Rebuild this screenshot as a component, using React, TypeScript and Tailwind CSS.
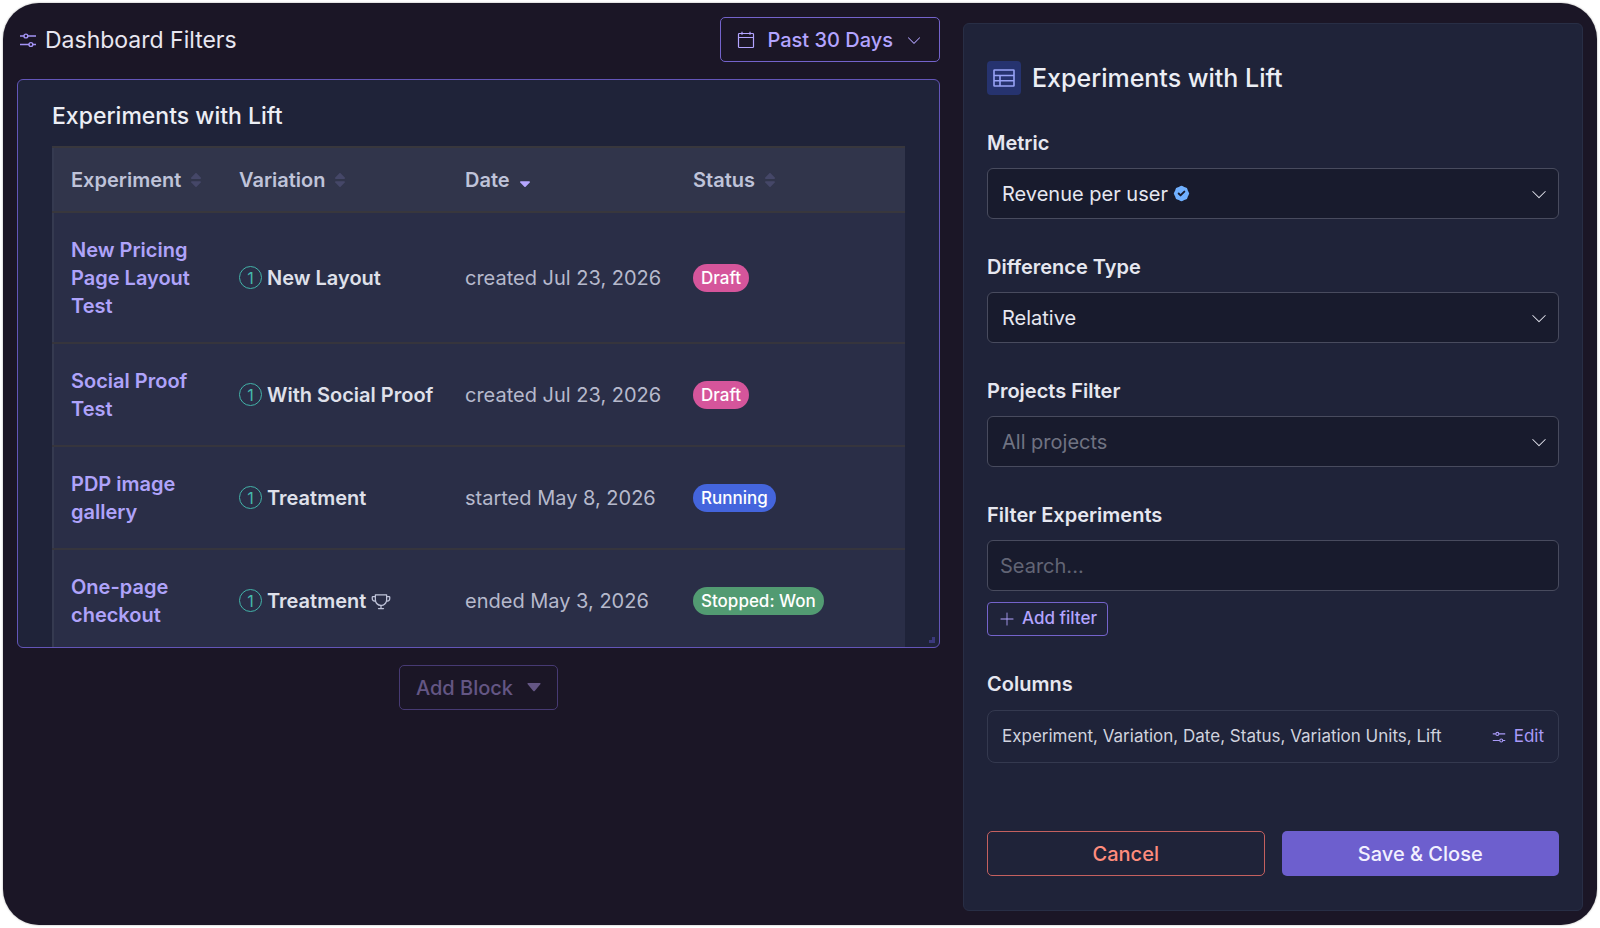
import type { ReactNode } from 'react';
import { FaSort, FaSortDown } from 'react-icons/fa';
import { HiBadgeCheck } from 'react-icons/hi';
import { PiCaretDownLight, PiPlusLight, PiTrophy } from 'react-icons/pi';

type Status = 'Draft' | 'Running' | 'Stopped: Won';

interface Experiment {
  name: string;
  variation: string;
  date: string;
  status: Status;
  won?: boolean;
}

const EXPERIMENTS: Experiment[] = [
  { name: 'New Pricing Page Layout Test', variation: 'New Layout', date: 'created Jul 23, 2026', status: 'Draft' },
  { name: 'Social Proof Test', variation: 'With Social Proof', date: 'created Jul 23, 2026', status: 'Draft' },
  { name: 'PDP image gallery', variation: 'Treatment', date: 'started May 8, 2026', status: 'Running' },
  { name: 'One-page checkout', variation: 'Treatment', date: 'ended May 3, 2026', status: 'Stopped: Won', won: true },
];

const STATUS_CLASSES: Record<Status, string> = {
  Draft: 'bg-[#d5559b]',
  Running: 'bg-[#4465dd]',
  'Stopped: Won': 'bg-[#529b72]',
};

const COLUMNS = [
  { label: 'Experiment', width: 'w-[169px]' },
  { label: 'Variation', width: 'w-[226px]' },
  { label: 'Date', width: 'w-[228px]', sorted: true },
  { label: 'Status', width: '' },
];

function SlidersIcon({ className }: { className?: string }) {
  return (
    <svg viewBox="0 0 18 18" fill="none" stroke="currentColor" strokeWidth="1.4" className={className} aria-hidden>
      <path d="M1 5h4M8.8 5H17M1 13.5h9M13.8 13.5H17" />
      <circle cx="6.9" cy="5" r="1.9" />
      <circle cx="11.9" cy="13.5" r="1.9" />
    </svg>
  );
}

function CalendarIcon({ className }: { className?: string }) {
  return (
    <svg viewBox="0 0 18 18" fill="none" stroke="currentColor" strokeWidth="1.2" className={className} aria-hidden>
      <rect x="1.5" y="2.5" width="15" height="14" rx="0.8" />
      <path d="M1.5 6.5h15M5 0.8v3M13 0.8v3" />
    </svg>
  );
}

function TableIcon() {
  return (
    <svg viewBox="0 0 22 18" fill="none" stroke="currentColor" strokeWidth="1.6" className="h-[18px] w-[22px]" aria-hidden>
      <rect x="1" y="1" width="20" height="16" rx="0.5" />
      <path d="M1 6.5h20M1 11.7h20M7 6.5V17" />
    </svg>
  );
}

function Field({ label, htmlFor, children }: { label: string; htmlFor: string; children: ReactNode }) {
  return (
    <div className="mb-[34px]">
      <label htmlFor={htmlFor} className="mb-[11px] block text-xl leading-7 font-semibold text-[#e6e7f0]">
        {label}
      </label>
      {children}
    </div>
  );
}

function SelectBox({ id, value, placeholder, verified }: { id: string; value: string; placeholder?: boolean; verified?: boolean }) {
  return (
    <div className="relative">
      <select
        id={id}
        className={`block h-[51px] w-full appearance-none rounded-md border border-[#484b5e] bg-[#181b2d] px-[14px] text-xl ${
          placeholder ? 'text-[#707382]' : 'text-[#e6e7f0]'
        }`}
      >
        <option>{value}</option>
      </select>
      {verified && (
        <span className="pointer-events-none absolute inset-y-0 left-[15px] flex items-center gap-1 text-xl">
          <span className="invisible">{value}</span>
          <HiBadgeCheck className="h-[19px] w-[19px] text-[#70b0ff]" />
        </span>
      )}
      <PiCaretDownLight className="pointer-events-none absolute top-4 right-2.5 h-5 w-5 text-[#e6e7f0]" />
    </div>
  );
}

function ExperimentsTable() {
  return (
    <table className="w-full table-fixed border-collapse border-l-2 border-[#353a50] bg-[#2a2e47] text-left text-xl leading-7">
      <thead className="border-y-2 border-[#38373d] bg-[#31354b] text-[#bfc3d9]">
        <tr>
          {COLUMNS.map(({ label, width, sorted }) => (
            <th key={label} scope="col" className={`h-[65px] pl-[17px] font-semibold ${width}`}>
              <button type="button" className="flex items-center gap-1.5">
                {label}
                {sorted ? (
                  <FaSortDown className="h-[18px] w-[18px] text-[#b5a6ff]" />
                ) : (
                  <FaSort className="h-[18px] w-[18px] text-[#454768]" />
                )}
              </button>
            </th>
          ))}
        </tr>
      </thead>
      <tbody>
        {EXPERIMENTS.map((e) => (
          <tr key={e.name} className="border-b-2 border-[#36353d]">
            <td className="pt-[23px] pr-6 pb-[22px] pl-[17px] font-semibold text-[#afa3fa]">
              <a href="#experiment">{e.name}</a>
            </td>
            <td className="pl-[17px]">
              <div className="flex items-center font-semibold text-[#dfe0ea]">
                <span className="mr-[5px] flex h-[23px] w-[23px] items-center justify-center rounded-full border border-[#43b3a9] text-base font-normal text-[#45b8ac]">
                  1
                </span>
                {e.variation}
                {e.won && <PiTrophy className="ml-[5px] h-5 w-5 text-[#bfc3d9]" />}
              </div>
            </td>
            <td className="pl-[17px] text-[#b6b9cc]">{e.date}</td>
            <td className="pl-[17px]">
              <span className={`inline-block rounded-full px-2 text-[17px] leading-7 font-medium text-white ${STATUS_CLASSES[e.status]}`}>
                {e.status}
              </span>
            </td>
          </tr>
        ))}
      </tbody>
    </table>
  );
}

function Dashboard() {
  return (
    <main className="min-w-0">
      <div className="flex items-center justify-between">
        <h1 className="flex items-center gap-2 pl-0.5 text-[23px] leading-8 text-[#e8e6f0]">
          <SlidersIcon className="h-[18px] w-[18px] text-[#a494f5]" />
          Dashboard Filters
        </h1>
        <button type="button" className="flex h-[45px] items-center rounded-[5px] border border-[#7463cb] px-4 text-xl font-medium text-[#b3a4ff]">
          <CalendarIcon className="mr-3 h-[18px] w-[18px]" />
          Past 30 Days
          <PiCaretDownLight className="ml-3 h-[18px] w-[18px]" />
        </button>
      </div>

      <section className="relative mt-[17px] h-[569px] overflow-hidden rounded-md border border-[#6355b8] bg-[#1f2339] px-[34px] pt-5">
        <h2 className="mb-[14px] text-[23px] leading-8 font-medium text-[#eceef5]">Experiments with Lift</h2>
        <ExperimentsTable />
        <span className="absolute right-1 bottom-1 h-1.5 w-1.5 border-r-3 border-b-3 border-[#3b397c]" />
      </section>

      <div className="mt-[17px] flex justify-center">
        <button type="button" disabled className="flex h-[45px] items-center gap-[14px] rounded-[5px] border border-[#473a73] px-4 text-xl font-medium text-[#645684]">
          Add Block
          <svg viewBox="0 0 14 9" fill="currentColor" className="h-[9px] w-[14px]" aria-hidden>
            <path d="M1 0h12q1 0.5 0.5 1L7.7 8q-.7 .7-1.4 0L.5 1Q0 .5 1 0Z" />
          </svg>
        </button>
      </div>
    </main>
  );
}

function SettingsPanel() {
  return (
    <aside className="mt-1.5 min-w-0 rounded-md border border-[#282e45] bg-[#1f2339] px-[23px] pt-[37px]">
      <h2 className="mb-[34px] flex items-center gap-[11px] text-[25px] leading-8 font-medium text-[#eceef5]">
        <span className="flex h-[34px] w-[34px] items-center justify-center rounded bg-[#26336f] text-[#98a2f5]">
          <TableIcon />
        </span>
        Experiments with Lift
      </h2>

      <Field label="Metric" htmlFor="metric">
        <SelectBox id="metric" value="Revenue per user" verified />
      </Field>
      <Field label="Difference Type" htmlFor="difference">
        <SelectBox id="difference" value="Relative" />
      </Field>
      <Field label="Projects Filter" htmlFor="projects">
        <SelectBox id="projects" value="All projects" placeholder />
      </Field>
      <Field label="Filter Experiments" htmlFor="search">
        <input
          id="search"
          type="text"
          placeholder="Search..."
          className="block h-[51px] w-full rounded-md border border-[#484b5e] bg-[#181b2d] px-3 text-xl placeholder:text-[#626575]"
        />
        <button type="button" className="mt-[11px] flex h-[34px] items-center gap-1.5 rounded border border-[#7463cb] px-[10px] text-[17px] font-medium text-[#b3a4ff]">
          <PiPlusLight className="h-[18px] w-[18px]" />
          Add filter
        </button>
      </Field>

      <h3 className="mb-3 text-xl leading-7 font-semibold text-[#e6e7f0]">Columns</h3>
      <div className="flex h-[53px] items-center justify-between rounded-lg border border-[#34394f] px-[14px]">
        <p className="text-[17px] text-[#d0d2de]">Experiment, Variation, Date, Status, Variation Units, Lift</p>
        <button type="button" className="flex items-center gap-2 text-[17px] text-[#a99af8]">
          <SlidersIcon className="h-[14px] w-[14px]" />
          Edit
        </button>
      </div>

      <div className="mt-[68px] grid grid-cols-2 gap-[17px] text-xl font-medium">
        <button type="button" className="h-[45px] rounded-[5px] border border-[#c4605f] text-[#ff8c7d]">
          Cancel
        </button>
        <button type="button" className="h-[45px] rounded-[5px] bg-[#6d5fce] text-[#f2f0ff]">
          Save &amp; Close
        </button>
      </div>
    </aside>
  );
}

export default function App() {
  return (
    <div className="min-h-screen bg-white p-[3px] font-[Inter,sans-serif]">
      <div className="grid min-h-[calc(100vh-6px)] grid-cols-[923fr_620fr] gap-[23px] rounded-[36px] bg-[#1b1626] p-[14px] shadow-[0_0_2px_rgba(0,0,0,0.4)]">
        <Dashboard />
        <SettingsPanel />
      </div>
    </div>
  );
}
